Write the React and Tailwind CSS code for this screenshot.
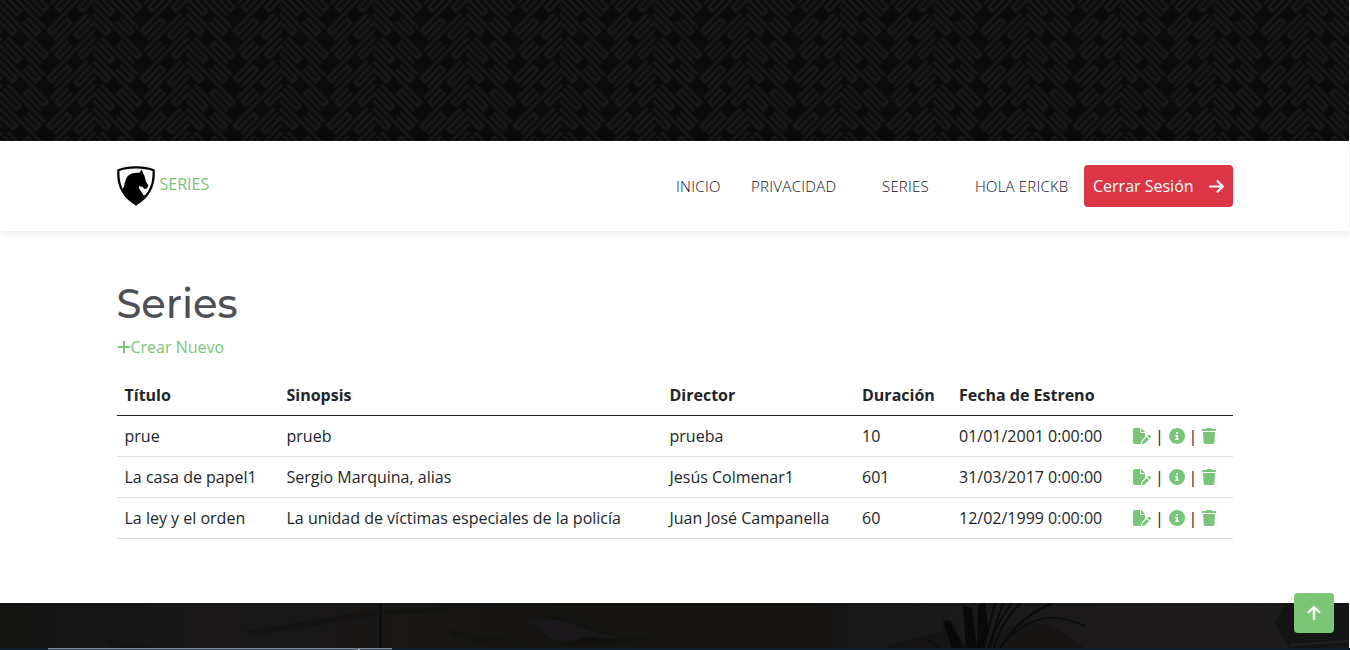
import React from "react";
import { FaPlus, FaArrowRight, FaFilePen, FaCircleInfo, FaTrash } from "react-icons/fa6";
import { BsArrowUpShort } from "react-icons/bs";

const rows = [
  ["prue", "prueb", "prueba", "10", "01/01/2001 0:00:00"],
  ["La casa de papel1", "Sergio Marquina, alias", "Jesús Colmenar1", "601", "31/03/2017 0:00:00"],
  ["La ley y el orden", "La unidad de víctimas especiales de la policía", "Juan José Campanella", "60", "12/02/1999 0:00:00"],
];

const cols = "grid grid-cols-[162px_383px_192.5px_97px_173px_1fr]";

// One half of the weave, on a 24 x 12 diagonal lattice; the other half is its mirror image.
const strands =
  "M0 0L12 12L11 13L7 9L6 10L10 14 M0 2L4 6L3 7L0 4 M2 8L11 17 M1 9L5 13L4 14L0 10 M7 15L10 18L9 19L6 16";

function Weave() {
  return (
    <svg className="block h-full w-full" aria-hidden="true">
      <defs>
        <pattern id="weave" width="24" height="12" patternUnits="userSpaceOnUse" patternTransform="translate(1 7) scale(3.889 3.944)">
          <rect width="24" height="12" fill="#0b0b0b" />
          <g fill="none" stroke="#171717" strokeWidth="0.8" strokeLinecap="round" strokeLinejoin="round">
            {[-24, -12, 0, 12].map((dy) =>
              [-24, 0, 24].map((dx) => (
                <g key={`${dx}/${dy}`} transform={`translate(${dx} ${dy})`}>
                  <path d={strands} />
                  <path d={strands} transform="translate(24 6) scale(-1 1)" />
                </g>
              ))
            )}
          </g>
        </pattern>
      </defs>
      <rect width="100%" height="100%" fill="url(#weave)" />
    </svg>
  );
}

function HorseLogo() {
  return (
    <svg width="38" height="40" viewBox="0 0 38 40" className="shrink-0" aria-hidden="true">
      <path d="M19 1.3C25 1.3 32 2.2 36.6 4.2C37.4 16 34.5 29 19 38.3C3.5 29 .6 16 1.4 4.2C6 2.2 13 1.3 19 1.3Z" fill="#fff" stroke="#000" strokeWidth="2.3" />
      <path d="M5 25.500C5.500 22 8 20.500 7.500 17C9.500 14.500 8.500 11.500 11.500 9.500C14.500 6.800 18.500 6.500 22.300 6.800L24.900 3.500L26 7.200L27.600 10L28.800 15L31.300 19.500L30 22.500L27.600 23L25.600 21L22 20C21.300 24 26 26 26 29L29.500 30L19 38.600C12 34.500 7.500 30.500 5 25.500Z" fill="#000" />
    </svg>
  );
}

function FooterPhoto() {
  return (
    <svg className="block h-full w-full" viewBox="0 0 1349 45" preserveAspectRatio="none" aria-hidden="true">
      <defs>
        <linearGradient id="room" x1="0" x2="1">
          <stop offset="0" stopColor="#131210" />
          <stop offset=".05" stopColor="#161717" />
          <stop offset=".14" stopColor="#191719" />
          <stop offset=".3" stopColor="#191816" />
          <stop offset=".42" stopColor="#151411" />
          <stop offset=".6" stopColor="#151411" />
          <stop offset=".64" stopColor="#1a191a" />
          <stop offset=".8" stopColor="#1c1a19" />
          <stop offset=".93" stopColor="#1e1c1c" />
          <stop offset="1" stopColor="#191717" />
        </linearGradient>
      </defs>
      <rect width="1349" height="45" fill="url(#room)" />
      <path d="M247 28L380 6L450 5V9L380 12L250 33Z" fill="#151412" />
      <path d="M105 37L150 43V45H112Z" fill="#151313" />
      <path d="M450 27L520 39L525 45H490L450 31Z" fill="#141311" />
      <path d="M525 16L560 17L620 35L555 38Z" fill="#1a181a" />
      <path d="M540 4L622 35L600 31L545 12Z" fill="#141311" />
      <path d="M560 43L585 34L650 36L600 43Z" fill="#12110f" />
      <path d="M885 45Q910 34 940 30L945 18L955 20L958 45Z" fill="#151314" />
      <path d="M1008 24Q1035 14 1060 28L1084 45H985Z" fill="#171414" />
      <path d="M1285 0L1275 20L1290 48L1349 42V0Z" fill="#161516" />
      <path d="M380.500 0V45" stroke="#0a0a0a" strokeWidth="1.6" />
      <path d="M943 18L950 17L963 45H952ZM963 3L972 5L977 45H966ZM978 2L985 0L988 25L983 45H977Z" fill="#0a0909" />
      <g fill="none" stroke="#0c0b0b" strokeWidth="2">
        <path d="M995 0L984 45M1003 0L988 45M1012 0Q996 20 990 45M1021 0Q1000 20 994 45M1053 0Q1020 13 1000 45" />
        <path d="M1006 38Q1030 13 1055 15Q1070 16 1085 23M929 37L940 45M955 28L965 45" strokeWidth="1.4" />
      </g>
      <path d="M1290 42L1349 38" stroke="#222021" strokeWidth="2" />
    </svg>
  );
}

function Actions() {
  return (
    <div className="flex h-6 items-center pl-[0.5px] text-[#79c577]">
      <a className="flex pb-px"><FaFilePen size={16} className="w-[18px]" /></a>
      <span className="w-[18px] text-center text-[#212529]">|</span>
      <a className="flex pb-px"><FaCircleInfo size={16} /></a>
      <span className="w-[17px] text-center text-[#212529]">|</span>
      <a className="flex pb-px"><FaTrash size={16} className="w-[14px]" /></a>
    </div>
  );
}

export default function App() {
  return (
    <div className="relative h-[650px] overflow-hidden bg-white font-['Open_Sans',sans-serif] text-base leading-6 text-[#212529]">
      <div className="flex h-full w-[1349px] flex-col">
        <div className="h-[141px] shrink-0 bg-[#0d0d0d]"><Weave /></div>

        <header className="flex h-[90px] shrink-0 justify-between pr-[116px] pl-[117px] shadow-[0_2px_10px_rgba(0,0,0,0.1)]">
          <a className="flex h-[90px] items-start gap-[4.5px] pt-[25px] text-[#79c577]">
            <HorseLogo />
            <span className="pt-1.5 text-base font-normal">SERIES</span>
          </a>
          <nav className="mt-6 flex h-[42px] items-center text-[15px] font-[360] tracking-[0.3px] text-[#0f0a1a]">
            <a className="w-[75px]">INICIO</a>
            <a className="w-[131px]">PRIVACIDAD</a>
            <a className="w-[93px] tracking-[0.2px]">SERIES</a>
            <a className="w-[109px] tracking-[0.2px]">HOLA ERICKB</a>
            <button className="flex h-[42px] w-[149px] items-center justify-between rounded bg-[#dc3545] px-[9px] text-base font-normal tracking-normal text-white">
              Cerrar Sesión
              <FaArrowRight size={17} className="w-[15px]" />
            </button>
          </nav>
        </header>

        <main className="h-[372px] shrink-0 px-[116.5px] pt-12">
          <h1 className="h-12 font-[Montserrat,Inter,sans-serif] text-[40px] leading-[49px] font-medium text-[#4e5055]">Series</h1>
          <a className="mt-2 flex items-center text-[#79c577]">
            <FaPlus size={16} className="w-[14px]" />
            Crear Nuevo
          </a>
          <div className="mt-4">
            <div className={`${cols} h-[41px] border-b border-[#212529] font-bold`}>
              {["Título", "Sinopsis", "Director", "Duración", "Fecha de Estreno", ""].map((h, i) => (
                <div key={i} className="p-2">{h}</div>
              ))}
            </div>
            {rows.map((r) => (
              <div key={r[0]} className={`${cols} h-[41px] border-b border-[#dee2e6]`}>
                {r.map((c, i) => (
                  <div key={i} className="p-2 whitespace-nowrap">{c}</div>
                ))}
                <div className="p-2"><Actions /></div>
              </div>
            ))}
          </div>
        </main>

        <footer className="h-[45px] shrink-0 bg-[#171615]"><FooterPhoto /></footer>
        <div className="h-0.5 w-[1350px] shrink-0 bg-[#10202d] pl-12">
          <div className="h-0.5 w-[344px] border-t border-[#758596] bg-[#465767]">
            <div className="ml-[310px] h-px w-0.5 bg-[#b7b7bd]" />
          </div>
        </div>
      </div>

      <a className="absolute top-[593px] right-4 flex size-10 items-center justify-center rounded bg-[#7cc576] text-white">
        <BsArrowUpShort size={28} strokeWidth={0.4} stroke="currentColor" />
      </a>
    </div>
  );
}
